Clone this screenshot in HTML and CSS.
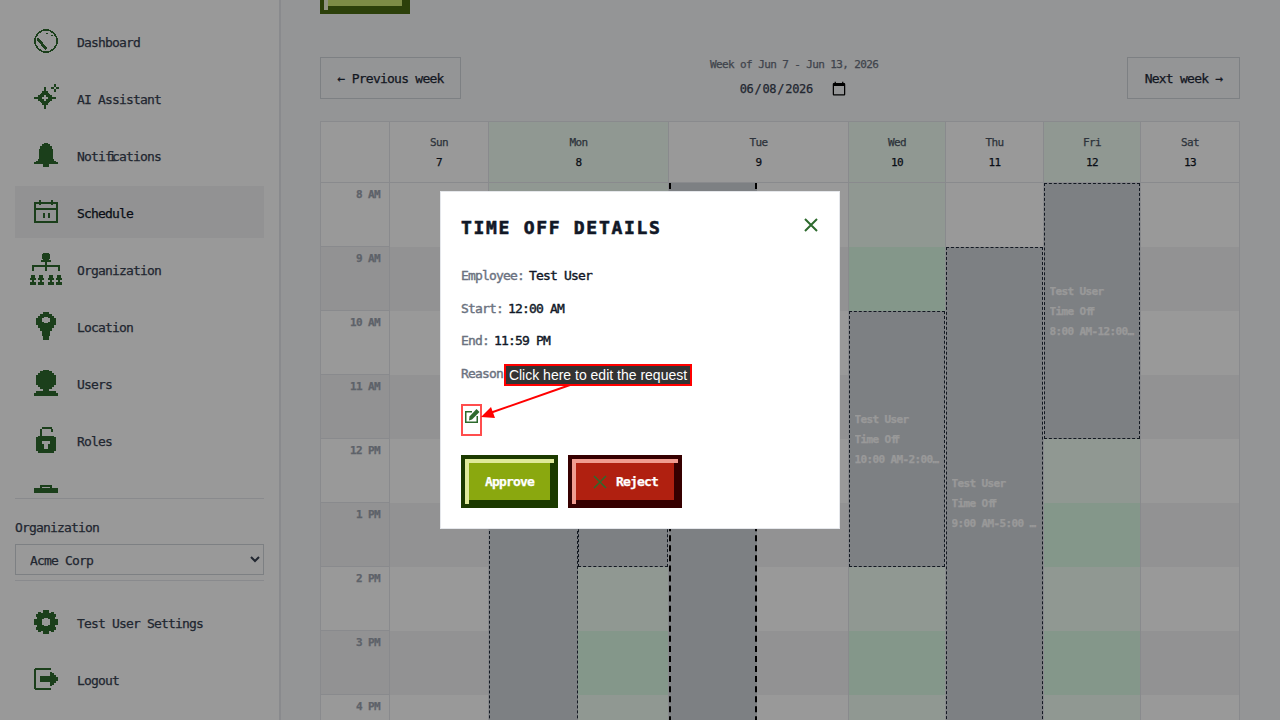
FILE: index.html
```html
<!DOCTYPE html>
<html lang="en">
<head>
    <meta charset="UTF-8">
    <meta name="viewport" content="width=device-width, initial-scale=1.0">
    <title>Schedule</title>
    <link rel="stylesheet" href="styles.css">
</head>
<body>
    <div class="app">
        <aside class="sidebar">
            <nav class="nav">
                <a class="nav-item"><span class="nav-icon"><svg width="24" height="24" viewBox="0 0 24 24"><circle cx="12" cy="12" r="11" fill="none" stroke="currentColor" stroke-width="1.6"/><path d="M3 9l2 0 8 10 -2 2 -8-10z M12 4h2v1h-2z M17 6h2v1h-2z" fill="currentColor"/></svg></span><span>Dashboard</span></a>
                <a class="nav-item"><span class="nav-icon"><svg width="24" height="24" viewBox="0 0 24 24"><path fill-rule="evenodd" d="M10 1H12V5H14V7H15V8H16V9H18V11H22V13H18V15H16V16H15V17H14V19H12V23H10V19H8V17H7V16H6V15H4V13H0V11H4V9H6V8H7V7H8V5H10Z M10 9V11H8V13H10V15H12V13H14V11H12V9Z M20 -2H22V1H20Z M20 3H22V6H20Z M17 1H20V3H17Z M22 1H25V3H22Z"/></svg></span><span>AI Assistant</span></a>
                <a class="nav-item"><span class="nav-icon"><svg width="24" height="24" viewBox="0 0 24 24"><path d="M10 0H14V1H16V3H18V6H19V16H20V18H22V19H24V21H15V24H9V21H0V19H2V18H4V16H5V6H6V3H8V1H10Z"/></svg></span><span>Noti<span class="lig">fi</span>cations</span></a>
                <a class="nav-item active"><span class="nav-icon"><svg width="24" height="24" viewBox="0 0 24 24"><path fill-rule="evenodd" d="M0 2H24V23H0Z M2 4V8H22V4Z M2 10V21H22V10Z M5 0H7V2H5Z M17 0H19V2H17Z M5 4H7V5H5Z M17 4H19V5H17Z M9 13H11V18H9Z M14 13H16V18H14Z"/></svg></span><span>Schedule</span></a>
                <a class="nav-item"><span class="nav-icon"><svg width="32" height="32" viewBox="0 0 32 32"><path d="M13 0H19V1H20V6H19V7H21V9H11V7H13V6H12V1H13Z M15 9H17V12H30V18H28V14H17V18H15V14H4V18H2V12H15Z M1 22H5V25H6V27H4V29H6V32H0V29H2V27H0V25H1Z M9 22H13V25H14V27H12V29H14V32H8V29H10V27H8V25H9Z M19 22H23V25H24V27H22V29H24V32H18V29H20V27H18V25H19Z M27 22H31V25H32V27H30V29H32V32H26V29H28V27H26V25H27Z"/></svg></span><span>Organization</span></a>
                <a class="nav-item"><span class="nav-icon"><svg width="20" height="28" viewBox="0 0 20 28"><path fill-rule="evenodd" d="M7 0H13V2H16V4H18V6H20V13H18V16H16V19H14V24H13V28H7V24H6V19H4V16H2V13H0V6H2V4H4V2H7Z M8 5V6H6V10H8V11H12V10H14V6H12V5Z"/></svg></span><span>Location</span></a>
                <a class="nav-item"><span class="nav-icon"><svg width="24" height="26" viewBox="0 0 24 26"><path d="M9 0H15V1H18V3H20V5H22V15H20V17H18V19H15V21H22V23H24V26H0V23H2V21H9V19H6V17H4V15H2V5H4V3H6V1H9Z"/></svg></span><span>Users</span></a>
                <a class="nav-item"><span class="nav-icon"><svg width="20" height="26" viewBox="0 0 20 26"><path fill-rule="evenodd" d="M2 9H18V10H20V24H18V26H2V24H0V10H2Z M6 14V17H8V22H12V17H14V14Z M4 9V2H6V0H16V2H17V5H15V2H6V9Z"/></svg></span><span>Roles</span></a>
                <a class="nav-item"><span class="nav-icon"><svg width="24" height="24" viewBox="0 0 24 24"><path fill-rule="evenodd" d="M6 0H18V3H24V24H0V3H6Z M8 2V3H16V2Z"/></svg></span><span>Time Off</span></a>
            </nav>
            <div class="org-picker">
                <label class="org-label" for="org">Organization</label>
                <select class="org-select" id="org">
                    <option>Acme Corp</option>
                </select>
            </div>
            <div class="nav-footer">
                <a class="nav-item"><span class="nav-icon"><svg width="24" height="24" viewBox="0 0 24 24"><path fill-rule="evenodd" d="M9 0H15V3H17V2H20V4H22V7H21V9H24V15H21V17H22V20H20V22H17V21H15V24H9V21H7V22H4V20H2V17H3V15H0V9H3V7H2V4H4V2H7V3H9Z M10 8V9H8V15H10V16H14V15H16V9H14V8Z"/></svg></span><span>Test User Settings</span></a>
                <a class="nav-item"><span class="nav-icon"><svg width="24" height="22" viewBox="0 0 24 22"><path d="M0 1H1V0H17V2H2V20H17V22H1V21H0Z M6 8H16V4H18V5H20V7H22V9H24V13H22V15H20V17H18V18H16V14H6Z"/></svg></span><span>Logout</span></a>
            </div>
        </aside>

        <main class="main">
            <button class="pixel-btn btn-light top-btn">Create</button>

            <div class="week-nav">
                <button class="week-btn">← Previous week</button>
                <div class="week-center">
                    <span class="week-label">Week of Jun 7 - Jun 13, 2026</span>
                    <input class="week-date" type="date" value="2026-06-08">
                </div>
                <button class="week-btn">Next week →</button>
            </div>

            <div class="calendar">
                <div class="head-cell"></div>
                <div class="head-cell"><span>Sun</span><b>7</b></div>
                <div class="head-cell open"><span>Mon</span><b>8</b></div>
                <div class="head-cell"><span>Tue</span><b>9</b></div>
                <div class="head-cell open"><span>Wed</span><b>10</b></div>
                <div class="head-cell"><span>Thu</span><b>11</b></div>
                <div class="head-cell open"><span>Fri</span><b>12</b></div>
                <div class="head-cell"><span>Sat</span><b>13</b></div>

                <div class="time-col">
                    <div class="time-cell">8 AM</div>
                    <div class="time-cell">9 AM</div>
                    <div class="time-cell">10 AM</div>
                    <div class="time-cell">11 AM</div>
                    <div class="time-cell">12 PM</div>
                    <div class="time-cell">1 PM</div>
                    <div class="time-cell">2 PM</div>
                    <div class="time-cell">3 PM</div>
                    <div class="time-cell">4 PM</div>
                </div>
                <div class="day-col"></div>
                <div class="day-col open">
                    <div class="event" style="top:64px;height:576px;width:89px"></div>
                    <div class="event" style="top:128px;height:256px;left:89px;right:0"></div>
                </div>
                <div class="day-col">
                    <div class="event selected" style="top:0;height:640px;width:88px"></div>
                </div>
                <div class="day-col open">
                    <div class="event" style="top:128px;height:256px">
                        <span>Test User</span><span>Time O<span class="lig">ff</span></span><span>10:00 AM-2:00 PM</span>
                    </div>
                </div>
                <div class="day-col">
                    <div class="event" style="top:64px;height:512px">
                        <span>Test User</span><span>Time O<span class="lig">ff</span></span><span>9:00 AM-5:00 PM</span>
                    </div>
                </div>
                <div class="day-col open">
                    <div class="event" style="top:0;height:256px">
                        <span>Test User</span><span>Time O<span class="lig">ff</span></span><span>8:00 AM-12:00 PM</span>
                    </div>
                </div>
                <div class="day-col last"></div>
            </div>
        </main>
    </div>

    <div class="overlay">
        <div class="modal">
            <div class="modal-header">
                <h2>Time Off Details</h2>
                <button class="close-btn"><svg width="14" height="14" viewBox="0 0 14 14"><path d="M1 1L13 13M13 1L1 13" stroke="currentColor" stroke-width="2"/></svg></button>
            </div>
            <p class="detail"><span>Employee:</span>Test User</p>
            <p class="detail"><span>Start:</span>12:00 AM</p>
            <p class="detail"><span>End:</span>11:59 PM</p>
            <p class="detail"><span>Reason:</span>Vacation</p>
            <button class="edit-btn"><svg width="16" height="16" viewBox="0 0 16 16"><path fill="currentColor" d="M1 3H8V4.5H2.5V13.5H12.5V8H14V15H1Z"/><path fill="currentColor" d="M12.5 1L15.5 4L8 11.5L5 12.5L5.5 8.5Z"/></svg></button>
            <div class="modal-actions">
                <button class="pixel-btn btn-green">Approve</button>
                <button class="pixel-btn btn-red"><svg width="16" height="16" viewBox="0 0 16 16"><path d="M2 2L14 14M14 2L2 14" stroke="#2d6a2d" stroke-width="1.5"/></svg>Reject</button>
            </div>

            <!-- annotation on top of the dialog -->
            <div class="hint-label">Click here to edit the request</div>
            <div class="hint-box"></div>
            <svg class="hint-arrow" width="400" height="338" viewBox="440 191 400 338"><path d="M570 385L490 413" stroke="#ff0000" stroke-width="2"/><path d="M481 417L491 407L495 418Z" fill="#ff0000"/></svg>
        </div>
    </div>
</body>
</html>
```

FILE: styles.css
```css
* {
    box-sizing: border-box;
}

body {
    margin: 0;
    height: 720px;
    overflow: hidden;
    background: #f7f8fa;
    color: #374151;
    font-family: "DejaVu Sans Mono", monospace;
    font-size: 13px;
    letter-spacing: -0.83px;
    -webkit-text-stroke: 0.25px;
}

button {
    font: inherit;
    letter-spacing: inherit;
    cursor: pointer;
}

/* the fi and ff pairs sit in one cell, as in the original font */
.lig {
    letter-spacing: -0.33em;
}

.app {
    display: flex;
    height: 720px;
}

/* sidebar */
.sidebar {
    width: 281px;
    flex-shrink: 0;
    height: 720px;
    display: flex;
    flex-direction: column;
    padding: 0 15px;
    background: #fff;
    border-right: 2px solid #e5e7eb;
}

.nav {
    height: 493px;
    flex-shrink: 0;
    margin-bottom: 5px;
    padding-top: 15px;
    overflow: hidden;
    display: flex;
    flex-direction: column;
    gap: 5px;
}

.nav-item {
    height: 52px;
    flex-shrink: 0;
    display: flex;
    align-items: center;
    gap: 15px;
    padding: 2px 0 0 15px;
    color: #374151;
}

.nav-item.active {
    background: #f3f4f6;
    color: #111827;
}

.nav-icon {
    width: 32px;
    height: 32px;
    margin-top: -2px;
    display: flex;
    align-items: center;
    justify-content: center;
    color: #2d6a2d;
}

.nav-icon svg {
    fill: currentColor;
    shape-rendering: crispEdges;
    overflow: visible;
}

.nav-icon circle {
    fill: none;
}

.org-picker {
    border-top: 1px solid #e5e7eb;
    border-bottom: 1px solid #e5e7eb;
    padding: 21px 0 5px;
}

.org-label {
    display: block;
    line-height: 16px;
    margin-bottom: 8px;
}

.org-select {
    display: block;
    width: 100%;
    height: 31px;
    padding: 2px 0 0 10px;
    background: #fff;
    border: 1px solid #d1d5db;
    border-radius: 0;
    color: #374151;
    font: inherit;
    letter-spacing: inherit;
}

.nav-footer {
    padding-top: 15px;
    display: flex;
    flex-direction: column;
    gap: 5px;
}

/* main column */
.main {
    flex: 1;
    min-width: 0;
    padding: 0 40px 0 39px;
    overflow: hidden;
}

.pixel-btn {
    height: 53px;
    padding: 0 20px;
    display: inline-flex;
    align-items: center;
    gap: 8px;
    border: 4px solid;
    color: #fff;
    font-weight: bold;
}

.btn-green {
    background: #8aa80f;
    border-color: #1c3a00;
    box-shadow: inset 4px 4px 0 #dfe99a, inset -4px -4px 0 #1c3a00;
}

.btn-red {
    background: #b02010;
    border-color: #360000;
    box-shadow: inset 4px 4px 0 #f09c90, inset -4px -4px 0 #360000;
}

.btn-light {
    background: #d0e975;
    border-color: #4a6b12;
    box-shadow: inset 4px 4px 0 #f4f7dd, inset -4px -4px 0 #4a6b12;
}

.top-btn {
    display: flex;
    margin-top: -39px;
}

.week-nav {
    display: flex;
    justify-content: space-between;
    align-items: center;
    margin-top: 43px;
    margin-bottom: 22px;
}

.week-btn {
    height: 42px;
    padding: 0 16.5px;
    background: transparent;
    border: 1px solid #d1d5db;
    color: #1f2937;
    letter-spacing: -0.75px;
}

.week-center {
    display: flex;
    flex-direction: column;
    align-items: center;
    gap: 10px;
    margin-top: -2px;
}

.week-label {
    font-size: 11px;
    letter-spacing: -0.62px;
    color: #6b7280;
}

.week-date {
    margin-right: 4px;
    border: none;
    background: transparent;
    color: #374151;
    font-family: inherit;
    font-size: 12px;
    letter-spacing: -0.3px;
}

.week-date::-webkit-calendar-picker-indicator {
    width: 16px;
    height: 16px;
    margin-left: 2px;
    padding: 0;
}

.calendar {
    display: grid;
    grid-template-columns: 69px 99px 180px 180px 97px 98px 97px 98px;
    width: 920px;
    border: 1px solid #e5e7eb;
    background: #fff;
    font-size: 11px;
    letter-spacing: -0.62px;
}

.head-cell {
    height: 61px;
    display: flex;
    flex-direction: column;
    align-items: center;
    justify-content: center;
    gap: 7px;
    border-right: 1px solid #e5e7eb;
    border-bottom: 1px solid #e5e7eb;
    color: #4b5563;
}

.head-cell:nth-child(8) {
    border-right: none;
}

.head-cell.open {
    background: #f0fdf4;
}

.head-cell b {
    font-weight: normal;
    color: #111827;
}

.time-col {
    border-right: 1px solid #e5e7eb;
}

.time-cell {
    height: 64px;
    padding: 5px 9px 0 0;
    text-align: right;
    color: #9ca3af;
    font-weight: bold;
    border-bottom: 1px solid #e5e7eb;
}

.time-cell:nth-child(even) {
    background: #f3f4f6;
}

.day-col {
    position: relative;
    height: 640px;
    border-right: 1px solid #e5e7eb;
    background: repeating-linear-gradient(#fff 0 64px, #f3f4f6 64px 128px);
}

.day-col.last {
    border-right: none;
}

.day-col.open {
    background: repeating-linear-gradient(#f0fdf4 0 64px, #dcfce7 64px 128px);
}

.event {
    position: absolute;
    left: 0;
    right: 0;
    display: flex;
    flex-direction: column;
    justify-content: center;
    padding: 2px 4.5px 0;
    background: #d1d5db;
    border: 1px dashed #1f2937;
    color: #fff;
    font-weight: bold;
    line-height: 20px;
}

.event > span {
    white-space: nowrap;
    overflow: hidden;
    text-overflow: ellipsis;
}

.event.selected {
    border: 2px dashed #000;
    border-top: none;
}

/* dialog */
.overlay {
    position: fixed;
    inset: 0;
    display: flex;
    align-items: center;
    justify-content: center;
    background: rgba(0, 0, 0, 0.4);
}

.modal {
    position: relative;
    width: 400px;
    height: 338px;
    padding: 20px;
    background: #fff;
    border: 1px solid #e5e7eb;
    color: #111827;
}

.modal-header {
    display: flex;
    justify-content: space-between;
    align-items: center;
    height: 32px;
    margin-bottom: 24px;
}

.modal-header h2 {
    margin: 0;
    font-size: 18px;
    line-height: 32px;
    letter-spacing: 1.7px;
    text-transform: uppercase;
    color: #111827;
    -webkit-text-stroke: 0.6px;
}

.close-btn {
    display: flex;
    padding: 0;
    margin: -6px 1px 0 0;
    border: none;
    background: none;
    color: #2d6a2d;
}

.detail {
    margin: 0 0 16px;
    line-height: 16.5px;
    -webkit-text-stroke: 0.4px;
}

.detail span {
    margin-right: 5px;
    color: #6b7280;
}

.edit-btn {
    display: flex;
    align-items: center;
    width: 21px;
    height: 32px;
    margin-top: 22px;
    padding: 0 0 8px 3px;
    border: none;
    background: none;
    color: #2d6a2d;
}

.modal-actions {
    display: flex;
    gap: 10px;
    margin-top: 19px;
}

.hint-label {
    position: absolute;
    left: 63px;
    top: 172px;
    width: 188px;
    height: 22px;
    border: 2px solid #ff0000;
    background: #333;
    color: #fff;
    font-family: "Liberation Sans", Arial, sans-serif;
    font-size: 14px;
    letter-spacing: 0;
    line-height: 18px;
    text-align: center;
    white-space: nowrap;
    -webkit-text-stroke: 0;
}

.hint-box {
    position: absolute;
    left: 20px;
    top: 212px;
    width: 21px;
    height: 32px;
    border: 2px solid #ff4d4d;
}

.hint-arrow {
    position: absolute;
    left: -1px;
    top: -1px;
    pointer-events: none;
}
```
